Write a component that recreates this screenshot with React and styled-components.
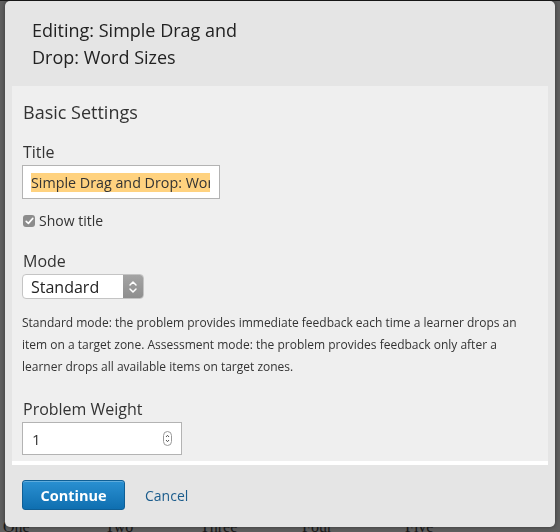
import styled, { createGlobalStyle } from "styled-components";

const GlobalStyle = createGlobalStyle`
  * { box-sizing: border-box; }
  html, body { margin: 0; padding: 0; }
  body {
    background: #5e5e5e;
    font-family: "Open Sans", "DejaVu Sans", sans-serif;
    overflow: hidden;
  }
`;

const Page = styled.div`
  height: 532px;
  border-top: 1px solid #1c1c1c;
  background: #606060;
  padding: 517px 0 0 3px;
`;

const WordRow = styled.div`
  display: grid;
  grid-template-columns: 102px 95px 102px 103px 100px;
  font-family: "Liberation Serif", serif;
  font-size: 16px;
  color: #1a1a1a;
`;

const Modal = styled.div`
  position: fixed;
  top: 1px;
  left: 5px;
  width: 550px;
  height: 526px;
  background: #e5e5e5;
  border-radius: 5px;
  box-shadow: 0 0 5px rgba(0, 0, 0, 0.45);
  display: flex;
  flex-direction: column;
`;

const Header = styled.div`
  height: 85px;
  padding: 16px 0 0 27px;
`;

const ModalTitle = styled.h2`
  margin: 0;
  width: 240px;
  font-size: 18px;
  font-weight: 400;
  line-height: 27px;
  color: #222;
`;

const Panel = styled.div`
  margin: 0 7px;
  background: #efefef;
  border-bottom: 4px solid #fff;
  padding: 14px 11px 6px 10px;
`;

const SectionTitle = styled.h3`
  margin: 0 0 0 1px;
  font-size: 18px;
  font-weight: 400;
  line-height: 24px;
  color: #333;
`;

const Label = styled.div`
  margin: ${({ $top }) => $top}px 0 2px 1px;
  font-size: 16px;
  line-height: 22px;
  color: #333;
`;

const TextField = styled.div`
  width: ${({ $w }) => $w}px;
  height: ${({ $h }) => $h}px;
  background: #fff;
  border: 1px solid #b3b3b3;
  display: flex;
  align-items: center;
  padding: 0 9px 0 ${({ $pl }) => $pl}px;
  font-size: ${({ $fs }) => $fs}px;
  color: #333;
  overflow: hidden;
  white-space: nowrap;
`;

const Selected = styled.span`
  background: #ffd27f;
  line-height: 19px;
  display: block;
  width: 100%;
  overflow: hidden;
`;

const CheckRow = styled.label`
  margin: 12px 0 0 1px;
  display: flex;
  align-items: center;
  gap: 4px;
  font-size: 14px;
  line-height: 20px;
  color: #333;
`;

const CheckBox = styled.span`
  width: 12px;
  height: 12px;
  border-radius: 3px;
  background: #8c8c8c;
  display: flex;
  align-items: center;
  justify-content: center;
`;

const Select = styled.div`
  width: 122px;
  height: 25px;
  border-radius: 4px;
  border: 1px solid #c4c4c4;
  background: #fff;
  display: flex;
  overflow: hidden;
  font-size: 16px;
  color: #222;
`;

const SelectValue = styled.div`
  flex: 1;
  padding-left: 8px;
  display: flex;
  align-items: center;
`;

const SelectArrow = styled.div`
  width: 20px;
  background: linear-gradient(#a4a4a4, #8e8e8e);
  display: flex;
  align-items: center;
  justify-content: center;
`;

const Help = styled.p`
  margin: 13px 0 0;
  font-size: 12px;
  line-height: 22px;
  color: #333;
`;

const Spinner = styled.span`
  margin-left: auto;
  display: flex;
`;

const Footer = styled.div`
  display: flex;
  align-items: center;
  gap: 20px;
  padding: 15px 0 0 17px;
`;

const PrimaryButton = styled.button`
  width: 103px;
  height: 30px;
  border-radius: 3px;
  border: 1px solid #0f5f96;
  background: linear-gradient(#2a90d2, #0f6fb0);
  color: #fff;
  font-family: inherit;
  font-weight: 700;
  font-size: 14.5px;
  box-shadow: inset 0 1px 0 rgba(255, 255, 255, 0.25);
`;

const LinkButton = styled.a`
  font-size: 14px;
  color: #1b5c8c;
`;

export default function App() {
  return (
    <>
      <GlobalStyle />
      <Page>
        <WordRow>
          <span>One</span>
          <span>Two</span>
          <span>Three</span>
          <span>Four</span>
          <span>Five</span>
        </WordRow>
      </Page>
      <Modal>
        <Header>
          <ModalTitle>Editing: Simple Drag and Drop: Word Sizes</ModalTitle>
        </Header>
        <Panel>
          <SectionTitle>Basic Settings</SectionTitle>
          <Label $top={17}>Title</Label>
          <TextField $w={198} $h={34} $pl={8} $fs={14.3}>
            <Selected>Simple Drag and Drop: Word Sizes</Selected>
          </TextField>
          <CheckRow>
            <CheckBox>
              <svg width="9" height="8" viewBox="0 0 9 8">
                <path d="M1.2 4.3 L3.4 6.4 L7.8 1.4" fill="none" stroke="#fff" strokeWidth="1.6" strokeLinecap="round" strokeLinejoin="round" />
              </svg>
            </CheckBox>
            Show title
          </CheckRow>
          <Label $top={19}>Mode</Label>
          <Select>
            <SelectValue>Standard</SelectValue>
            <SelectArrow>
              <svg width="10" height="14" viewBox="0 0 10 14">
                <path d="M2 5 L5 2 L8 5 M2 9 L5 12 L8 9" fill="none" stroke="#fff" strokeWidth="1.5" strokeLinecap="round" strokeLinejoin="round" />
              </svg>
            </SelectArrow>
          </Select>
          <Help>
            Standard mode: the problem provides immediate feedback each time a learner drops an item on a target zone. Assessment mode: the problem provides feedback only after a learner drops all available items on target zones.
          </Help>
          <Label $top={20}>Problem Weight</Label>
          <TextField $w={160} $h={33} $pl={9} $fs={15}>
            1
            <Spinner>
              <svg width="9" height="15" viewBox="0 0 9 15">
                <rect x="0.5" y="0.5" width="8" height="14" rx="4" fill="#fff" stroke="#9a9a9a" />
                <path d="M3 6 L4.5 4.3 L6 6 M3 9 L4.5 10.7 L6 9" fill="none" stroke="#555" strokeWidth="1" />
              </svg>
            </Spinner>
          </TextField>
        </Panel>
        <Footer>
          <PrimaryButton>Continue</PrimaryButton>
          <LinkButton>Cancel</LinkButton>
        </Footer>
      </Modal>
    </>
  );
}
